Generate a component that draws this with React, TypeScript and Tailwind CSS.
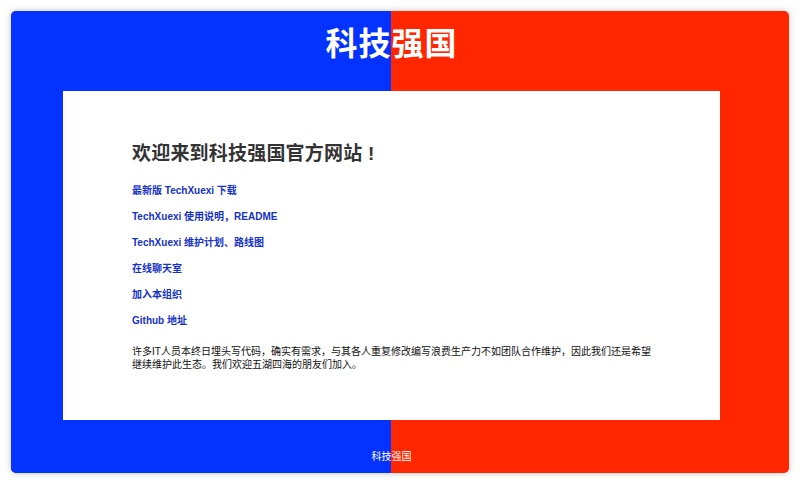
const links = [
  "最新版 TechXuexi 下载",
  "TechXuexi 使用说明，README",
  "TechXuexi 维护计划、路线图",
  "在线聊天室",
  "加入本组织",
  "Github 地址",
];

export default function App() {
  return (
    <div
      className="h-[485px] bg-white p-[11px]"
      style={{ fontFamily: '"Liberation Sans", "Noto Sans CJK SC", sans-serif' }}
    >
      <div className="flex h-[462px] overflow-hidden rounded-[5px] bg-[#ff2600] shadow-[0_0_6px_rgba(0,0,0,0.25)]">
        <div className="flex w-[761px] flex-col items-center bg-[linear-gradient(to_right,#0433ff_50%,#ff2600_50%)]">
          <div className="h-[80px] pt-[17px]">
            <h1 className="text-[32px] font-bold leading-[32px] tracking-[1px] text-white">
              科技强国
            </h1>
          </div>

          <div className="h-[329px] w-[657px] bg-white px-[69px] pt-[51px]">
            <h2 className="text-[19px] font-bold leading-[24px] tracking-[0.2px] text-[#333]">
              欢迎来到科技强国官方网站 !
            </h2>
            <ul className="mt-[12px]">
              {links.map((l) => (
                <li key={l} className="text-[10px] font-bold leading-[26px] text-[#1531c8]">
                  <a href="#">{l}</a>
                </li>
              ))}
            </ul>
            <p className="mt-[11px] text-[10px] leading-[13px] text-[#111]">
              许多IT人员本终日埋头写代码，确实有需求，与其各人重复修改编写浪费生产力不如团队合作维护，因此我们还是希望继续维护此生态。我们欢迎五湖四海的朋友们加入。
            </p>
          </div>

          <div className="flex-1 pt-[31px] text-[10px] leading-[12px] text-white">
            科技强国
          </div>
        </div>
      </div>
    </div>
  );
}
